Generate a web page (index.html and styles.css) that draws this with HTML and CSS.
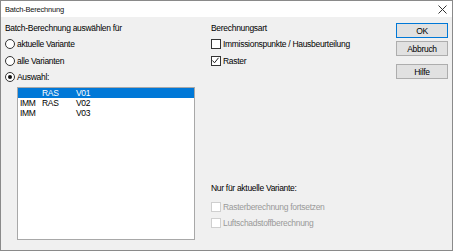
FILE: index.html
```html
<html>
  <head>
    <link rel="stylesheet" href="styles.css">
  </head>
  <body>
    <div class="window">
      <div class="titlebar">
        <span class="title">Batch-Berechnung</span>
        <svg class="close" width="9" height="9" viewBox="0 0 9 9">
          <path d="M0.5 0.5 L8.5 8.5 M8.5 0.5 L0.5 8.5" stroke="#333" stroke-width="1" fill="none"/>
        </svg>
      </div>
      <div class="content">
        <div class="col-left">
          <div class="row">Batch-Berechnung auswählen für</div>
          <div class="row"><span class="radio"></span>aktuelle Variante</div>
          <div class="row r2"><span class="radio"></span>alle Varianten</div>
          <div class="row"><span class="radio on"></span>Auswahl:</div>
          <div class="listbox">
            <div class="item selected"><span class="c1"></span><span class="c2">RAS</span><span>V01</span></div>
            <div class="item"><span class="c1">IMM</span><span class="c2">RAS</span><span>V02</span></div>
            <div class="item"><span class="c1">IMM</span><span class="c2"></span><span>V03</span></div>
          </div>
        </div>
        <div class="col-mid">
          <div class="row">Berechnungsart</div>
          <div class="row"><span class="check"></span>Immissionspunkte / Hausbeurteilung</div>
          <div class="row r2"><span class="check">
            <svg width="9" height="9" viewBox="0 0 9 9"><path d="M1.5 4.5 L3.5 6.8 L7.5 1.8" stroke="#222" stroke-width="1" fill="none"/></svg>
          </span>Raster</div>
          <div class="row only">Nur für aktuelle Variante:</div>
          <div class="row disabled r3"><span class="check"></span>Rasterberechnung fortsetzen</div>
          <div class="row disabled"><span class="check"></span>Luftschadstoffberechnung</div>
        </div>
        <div class="col-buttons">
          <div class="btn default">OK</div>
          <div class="btn">Abbruch</div>
          <div class="btn help">Hilfe</div>
        </div>
      </div>
    </div>
  </body>
</html>
```
FILE: styles.css
```css
body{
  margin: 0;
  padding: 0;
  background: #ffffff;
  font-family: "Liberation Sans", Arial, sans-serif;
  font-size: 8.5px;
  letter-spacing: -0.3px;
  color: #000;
}
.window{
  width: 451px;
  height: 249px;
  border: 1px solid #8a8a8a;
  background: #f0f0f0;
  display: flex;
  flex-direction: column;
}
.titlebar{
  height: 16px;
  background: #ffffff;
  display: flex;
  align-items: center;
  justify-content: space-between;
  padding: 0 5px 0 4px;
}
.title{
  font-size: 7.5px;
  letter-spacing: -0.2px;
  color: #111;
}
.content{
  flex: 1;
  display: flex;
  padding: 3px 0 0 4px;
}
.row{
  height: 16px;
  display: flex;
  align-items: center;
  white-space: nowrap;
}
.r2{
  margin-top: 1px;
}
.col-left{
  width: 191px;
}
.radio{
  width: 8px;
  height: 8px;
  border: 1px solid #333;
  border-radius: 50%;
  margin-right: 2px;
  background: #fff;
  position: relative;
  box-sizing: content-box;
}
.radio.on::after{
  content: "";
  position: absolute;
  left: 2px;
  top: 2px;
  width: 4px;
  height: 4px;
  border-radius: 50%;
  background: #111;
}
.listbox{
  margin: 2px 0 0 12px;
  width: 176px;
  height: 151px;
  border: 1px solid #a8a8a8;
  background: #fff;
}
.item{
  height: 10px;
  line-height: 10px;
  display: flex;
  padding-left: 2px;
}
.item.selected{
  background: #0078d7;
  color: #fff;
}
.c1{
  width: 22px;
}
.c2{
  width: 34px;
}
.col-mid{
  width: 185px;
  margin-left: 15px;
}
.check{
  width: 8px;
  height: 8px;
  border: 1px solid #333;
  margin-right: 2px;
  background: #fff;
  display: flex;
  box-sizing: content-box;
}
.check svg{
  margin: -1px 0 0 -1px;
}
.only{
  margin-top: 111px;
}
.r3{
  margin-top: 3px;
}
.disabled{
  color: #9a9a9a;
}
.disabled .check{
  border-color: #cfcfcf;
}
.col-buttons{
  margin-left: auto;
  margin-right: 4px;
  padding-top: 3px;
  width: 52px;
  display: flex;
  flex-direction: column;
}
.btn{
  height: 13px;
  border: 1px solid #adadad;
  background: #e1e1e1;
  display: flex;
  align-items: center;
  justify-content: center;
  margin-bottom: 3px;
}
.btn.default{
  border-color: #0078d7;
}
.btn.help{
  margin-top: 5px;
}
```
